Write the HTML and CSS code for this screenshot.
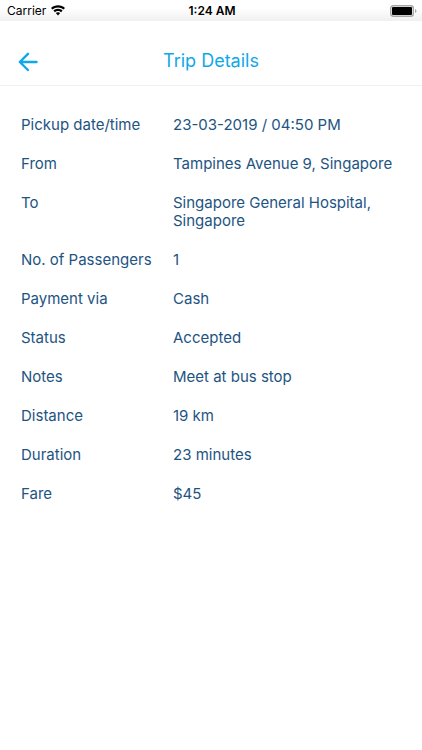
FILE: index.html
```html
<!DOCTYPE html>
<html lang="en">
<head>
<meta charset="utf-8">
<meta name="viewport" content="width=device-width, initial-scale=1">
<title>Trip Details</title>
<link rel="stylesheet" href="styles.css">
</head>
<body>
<div class="status-bar">
  <div class="carrier">
    <span>Carrier</span>
    <svg class="wifi" viewBox="0 0 14 11" aria-hidden="true">
      <path d="M7 0.200C4.300 .2 1.800 1.200 0 3L1.500 4.600C3 3.200 4.900 2.400 7 2.400s4 .8 5.500 2.200L14 3C12.200 1.200 9.700 .2 7 .2Z"/>
      <path d="M7 3.700c-1.800 0-3.400.7-4.600 1.900l1.500 1.600C4.700 6.400 5.800 5.900 7 5.900s2.300.5 3.100 1.300l1.500-1.600C10.400 4.400 8.800 3.700 7 3.700Z"/>
      <path d="M7 7.200c-.9 0-1.600.3-2.200.9L7 10.400l2.200-2.300C8.600 7.500 7.900 7.200 7 7.200Z"/>
    </svg>
  </div>
  <div class="clock">1:24 AM</div>
  <svg class="battery" viewBox="0 0 27 12" aria-hidden="true">
    <rect class="battery-case" x="0.700" y="0.700" width="22.600" height="10.600" rx="2.500"/>
    <rect x="2" y="2" width="20" height="8" rx="1"/>
    <path class="battery-tip" d="M25 4c2 .7 2 3.300 0 4Z"/>
  </svg>
</div>
<header class="nav">
  <button class="back" type="button" aria-label="Back">
    <svg viewBox="0 0 20 20" aria-hidden="true"><path d="M18.500 11H2M10 2.800L1.800 11l8.200 8"/></svg>
  </button>
  <h1 class="title">Trip Details</h1>
</header>
<main>
  <dl class="details">
    <dt>Pickup date/time</dt><dd>23-03-2019 / 04:50 PM</dd>
    <dt>From</dt><dd>Tampines Avenue 9, Singapore</dd>
    <dt>To</dt><dd>Singapore General Hospital, Singapore</dd>
    <dt>No. of Passengers</dt><dd>1</dd>
    <dt>Payment via</dt><dd>Cash</dd>
    <dt>Status</dt><dd>Accepted</dd>
    <dt>Notes</dt><dd>Meet at bus stop</dd>
    <dt>Distance</dt><dd>19 km</dd>
    <dt>Duration</dt><dd>23 minutes</dd>
    <dt>Fare</dt><dd>$45</dd>
  </dl>
</main>
</body>
</html>
```
FILE: styles.css
```css
* { box-sizing: border-box; }
body {
  margin: 0;
  background: #fff;
  color: #1d5482;
  font-family: Inter, "Liberation Sans", sans-serif;
}
.status-bar {
  display: grid;
  grid-template-columns: 1fr auto 1fr;
  align-items: center;
  height: 21px;
  padding: 0 5px 0 7px;
  background: linear-gradient(#fff 40%, #f0f0f0);
  color: #000;
  font-size: 12px;
}
.carrier { display: flex; align-items: center; gap: 5px; }
.wifi { width: 14px; height: 11px; }
.clock { font-weight: 600; }
.battery { width: 27px; height: 12px; justify-self: end; }
.battery-case { fill: none; stroke: #a6a6a6; stroke-width: 1.400; }
.battery-tip { fill: #a6a6a6; }
.nav {
  display: grid;
  grid-template-columns: 40px 1fr 40px;
  align-items: center;
  height: 65px;
  padding: 16px 8px 0;
  border-bottom: 1px solid #f1f1f1;
}
.back {
  display: flex;
  justify-content: center;
  padding: 8px;
  border: 0;
  background: none;
}
.back svg {
  width: 20px;
  height: 20px;
  overflow: visible;
  fill: none;
  stroke: #0fa8e8;
  stroke-width: 2.400;
  stroke-linecap: round;
  stroke-linejoin: round;
}
.title {
  margin: 0;
  color: #0fa8e8;
  font-size: 18px;
  font-weight: 400;
  line-height: 24px;
  text-align: center;
}
.details {
  display: grid;
  grid-template-columns: 2fr 3fr;
  row-gap: 21px;
  margin: 0;
  padding: 30px 21px;
  font-size: 15px;
  line-height: 18px;
}
.details dd { margin: 0; }
```
